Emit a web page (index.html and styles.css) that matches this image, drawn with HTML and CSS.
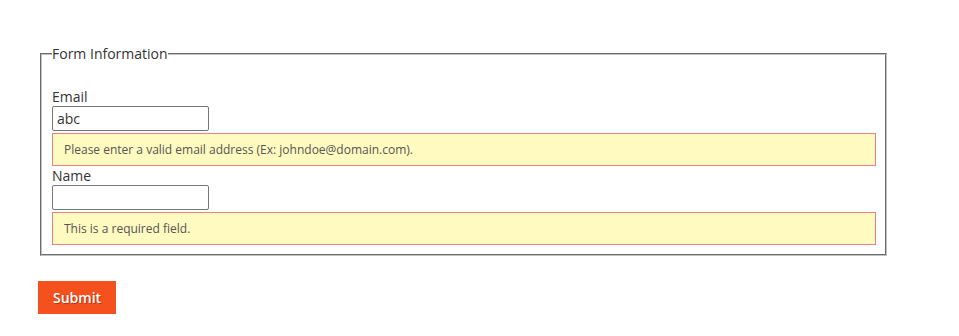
FILE: index.html
```html
<!DOCTYPE html>
<html lang="en">
<head>
    <meta charset="UTF-8">
    <meta name="viewport" content="width=device-width, initial-scale=1.0">
    <title>Form Information</title>
    <link rel="stylesheet" href="styles.css">
</head>
<body>

    <form class="page-form" novalidate>
        <!-- Fields -->
        <fieldset class="fieldset">
            <legend>Form Information</legend>

            <div class="field">
                <label for="email">Email</label>
                <input type="email" id="email" value="abc">
                <div class="field-error">Please enter a valid email address (Ex: johndoe@domain.com).</div>
            </div>

            <div class="field">
                <label for="name">Name</label>
                <input type="text" id="name">
                <div class="field-error">This is a required field.</div>
            </div>
        </fieldset>

        <!-- Actions -->
        <div class="actions">
            <button type="button" class="btn-submit">Submit</button>
        </div>
    </form>

</body>
</html>
```
FILE: styles.css
```css
/* General Styles */
body { font-family: "Open Sans", Arial, sans-serif; color: #333; background-color: #fff; margin: 0; padding: 45px 0 0 38px; }
.page-form { width: 851px; }

/* Fieldset */
.fieldset { margin: 0 2px; padding: 25px 9px 9px 10px; border: 2px groove #c0c0c0; }
.fieldset legend { padding: 0; font-size: 14px; line-height: 17px; color: #333; }

/* Fields */
.field label { display: block; font-size: 14px; line-height: 18px; color: #333; margin-top: 1px; }
.field input { display: block; box-sizing: border-box; width: 157px; height: 25px; margin: 0; padding: 0 4px; border: 1px solid #767676; border-radius: 2px; font-family: "Open Sans", Arial, sans-serif; font-size: 14px; color: #333; }
.field-error { margin-top: 2px; padding: 7px 11px; background-color: #fffabf; border: 1px solid #f08080; font-size: 12px; line-height: 17px; color: #555; }

/* Buttons */
.actions { margin-top: 25px; }
.btn-submit { padding: 0 15px; height: 33px; background-color: #f4511e; color: #fff; border: none; font-family: "Open Sans", Arial, sans-serif; font-size: 14px; font-weight: 600; text-shadow: 1px 1px 1px rgba(0, 0, 0, 0.3); cursor: pointer; }
```
